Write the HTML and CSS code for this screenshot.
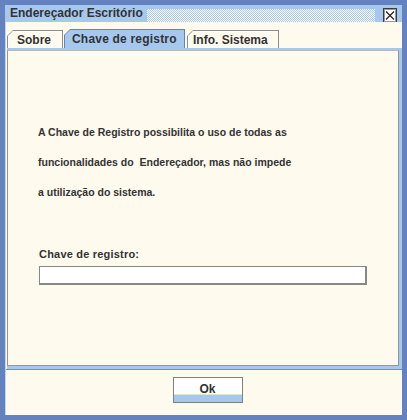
FILE: index.html
```html
<!DOCTYPE html>
<html>
<head>
<meta charset="utf-8">
<link rel="stylesheet" href="styles.css">
</head>
<body>
<div class="window">
  <div class="titlebar">
    <span class="title">Endereçador Escritório</span>
    <span class="dots"></span>
    <span class="close">
      <svg width="14" height="15" viewBox="0 0 14 15">
        <rect x="0.5" y="0.5" width="13" height="14" fill="#ffffff" stroke="#3a3a3a"/>
        <rect x="1.5" y="1.5" width="11" height="12" fill="none" stroke="#9a9a9a"/>
        <path d="M3 3.5 L11 11.5 M11 3.5 L3 11.5" stroke="#202020" stroke-width="1.2"/>
      </svg>
    </span>
  </div>
  <div class="body">
    <div class="tabpane">
      <div class="tabs">
        <div class="tab tab-sobre"><span>Sobre</span></div>
        <div class="tab tab-chave selected"><span>Chave de registro</span></div>
        <div class="tab tab-info"><span>Info. Sistema</span></div>
      </div>
      <div class="content-wrap">
        <div class="content">
          <p class="para">A Chave de Registro possibilita o uso de todas as<br>funcionalidades do&nbsp; Endereçador, mas não impede<br>a utilização do sistema.</p>
          <div class="label">Chave de registro:</div>
          <div class="field"></div>
        </div>
      </div>
    </div>
    <div class="footer">
      <div class="btn">Ok</div>
    </div>
  </div>
</div>
</body>
</html>
```

FILE: styles.css
```css
* { box-sizing: border-box; }
html, body { margin: 0; padding: 0; }
body {
  width: 407px;
  height: 420px;
  overflow: hidden;
  font-family: "Liberation Sans", Arial, sans-serif;
  color: #333333;
}
.window {
  width: 407px;
  height: 420px;
  background: #6382bf;
  padding: 5px;
  display: flex;
  flex-direction: column;
}
.titlebar {
  height: 17px;
  background: #a6c8ef;
  display: flex;
  align-items: center;
  padding-left: 5px;
  flex: none;
}
.title {
  width: 137px;
  flex: none;
  white-space: nowrap;
  font-weight: bold;
  font-size: 12px;
  line-height: 17px;
  color: #333333;
}
.dots {
  width: 228px;
  height: 13px;
  margin-top: 3px;
  flex: none;
  background-color: #a6c8ef;
  background-image: repeating-conic-gradient(#ffffff 0 25%, #a6c8ef 0 50%);
  background-size: 2px 2px;
}
.close {
  margin-left: 8px;
  width: 14px;
  height: 15px;
  margin-top: 4px;
  display: block;
  flex: none;
}
.close svg { display: block; }
.body {
  flex: 1;
  background: #fffaee;
  display: flex;
  flex-direction: column;
  border-left: 1px solid #c4d6ef;
}
.tabpane {
  padding-top: 7px;
  padding-left: 1px;
  display: flex;
  flex-direction: column;
}
.tabs {
  display: flex;
  height: 19px;
  align-items: flex-end;
}
.tab {
  position: relative;
  height: 18px;
  background: #8c8c8c;
  clip-path: polygon(6px 0, 100% 0, 100% 100%, 0 100%, 0 6px);
  font-weight: bold;
  font-size: 12px;
  display: flex;
  align-items: center;
  margin-right: 1px;
}
.tab::before {
  content: "";
  position: absolute;
  left: 1px;
  top: 1px;
  right: 1px;
  bottom: 0;
  background: #fffaee;
  clip-path: polygon(5px 0, 100% 0, 100% 100%, 0 100%, 0 5px);
  box-shadow: inset 1px 1px 0 #ffffff;
}
.tab span {
  position: relative;
  line-height: 16px;
  padding-top: 1px;
}
.tab-sobre { width: 56px; padding-left: 10px; }
.tab-chave { width: 121px; padding-left: 8px; height: 19px; background: #6382bf; letter-spacing: 0.2px; }
.tab-chave::before { background: #a6c8ef; box-shadow: none; }
.tab-info { width: 92px; padding-left: 6px; margin-left: 1px; }
.content-wrap {
  border-style: solid;
  border-color: #a6c8ef;
  border-width: 2px 3px 3px 0;
  height: 321px;
}
.content {
  height: 100%;
  border: 1px solid #959595;
  border-top-color: #b8b8b8;
  background: #fffaee;
  padding-left: 30px;
  padding-top: 1px;
}
.para {
  margin: 65px 0 0 0;
  font-weight: bold;
  font-size: 10.5px;
  line-height: 30px;
  color: #333333;
}
.label {
  margin-top: 40px;
  font-weight: bold;
  font-size: 11px;
  line-height: 15px;
  padding-left: 1px;
  letter-spacing: 0.2px;
}
.field {
  margin-top: 4px;
  margin-left: 1px;
  width: 328px;
  height: 19px;
  background: #ffffff;
  border: 1px solid #888888;
  border-right: 2px solid #888888;
  border-bottom: 2px solid #888888;
}
.footer {
  display: flex;
  justify-content: center;
  padding-top: 7px;
  padding-left: 7px;
  border-top: 1px solid #6f8fc4;
}
.btn {
  width: 70px;
  height: 26px;
  border: 1px solid #808080;
  background: linear-gradient(#ffffff 0, #ffffff 16px, #dfe6cf 16px, #dfe6cf 17px, #a6c8ef 17px);
  font-weight: bold;
  font-size: 12px;
  text-align: center;
  line-height: 22px;
  color: #333333;
}
```
